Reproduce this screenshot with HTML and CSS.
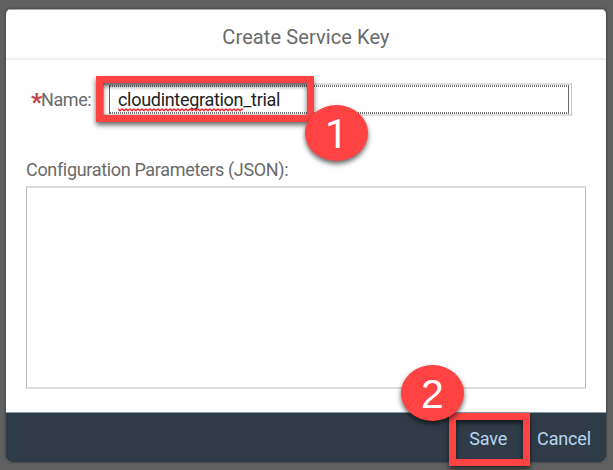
FILE: index.html
```html
<!DOCTYPE html>
<html lang="en">
<head>
<meta charset="utf-8">
<title>Create Service Key</title>
<link rel="stylesheet" href="styles.css">
</head>
<body>
<main class="dialog">
  <header class="title"><span>Create Service Key</span></header>
  <section class="content">
    <div class="name-row">
      <span class="label"><b class="required">*</b><span class="name-text">Name:</span></span>
      <div class="input"><div class="focus"><span class="value"><span class="typo">cloudintegration<svg class="wave" width="125" height="4"><defs><pattern id="wave" width="4" height="4" patternUnits="userSpaceOnUse"><path d="M0 .8 L2 2.8 L4 .8" fill="none" stroke="#ff2028" stroke-width="1.4"/></pattern></defs><rect width="125" height="4" fill="url(#wave)"/></svg></span>_trial</span></div></div>
    </div>
    <div class="params-label"><span>Configuration Parameters (JSON):</span></div>
    <div class="textarea"></div>
  </section>
  <footer class="footer"><span class="save">Save</span><span class="cancel">Cancel</span></footer>
</main>
<div class="mark mark-name"></div>
<div class="badge badge-one">1</div>
<div class="mark mark-save"></div>
<div class="badge badge-two">2</div>
</body>
</html>
```
FILE: styles.css
```css
* { box-sizing: border-box; }
body {
  margin: 0;
  width: 613px;
  height: 470px;
  padding: 9px 7px 8px 6px;
  overflow: hidden;
  background: #606060;
  font-family: Roboto, "Liberation Sans", sans-serif;
  font-size: 18px;
  color: #6a6a6a;
}
.dialog {
  display: flex;
  flex-direction: column;
  width: 600px;
  height: 453px;
  border-radius: 5px;
  overflow: hidden;
  background: #fff;
  box-shadow: 0 0 3px rgba(0, 0, 0, .5);
}
.title {
  height: 51px;
  border-top: 1px solid #aaa;
  border-bottom: 2px solid #f1f1f1;
  text-align: center;
  font-size: 20px;
  letter-spacing: .1px;
  line-height: 55px;
}
.content { flex: 1; padding: 23px 20px 0; }
.name-row { display: flex; height: 33px; }
.label { display: flex; width: 77px; padding-left: 5px; line-height: 33px; letter-spacing: -.4px; }
.required { color: #c14646; font-size: 24px; font-weight: 900; line-height: 38px; width: 10px; }
.input {
  width: 469px;
  padding: 0 2px 0 5px;
  border: 1px solid #c4c4c4;
  border-top: 2px solid #ddd;
  border-bottom: 2px solid #ddd;
}
.focus {
  height: 29px;
  padding-left: 8px;
  border-left: 1px solid #666;
  border-right: 1px solid #666;
  background:
    repeating-linear-gradient(90deg, #777 0 1px, #fff 1px 2px) top / 100% 2px no-repeat,
    repeating-linear-gradient(90deg, #777 0 1px, #fff 1px 2px) bottom / 100% 2px no-repeat;
  color: #222;
  line-height: 29px;
  letter-spacing: -.3px;
}
.typo { position: relative; }
.wave { position: absolute; left: 0; bottom: -2px; }
.params-label { height: 70px; padding-top: 43px; line-height: 22px; letter-spacing: -.33px; }
.textarea {
  height: 203px;
  border: 1px solid #b9b9b9;
  border-top: 2px solid #ddd;
  border-bottom: 2px solid #ddd;
}
.footer {
  display: flex;
  justify-content: flex-end;
  gap: 30px;
  height: 50px;
  padding-right: 15px;
  border-top: 1px solid #849ca9;
  background: #2f3c48;
  color: #b8d5f0;
  line-height: 51px;
  letter-spacing: -.15px;
}
.mark { position: absolute; border: 7px solid #ff4343; }
.mark-name {
  left: 96px; top: 76px; width: 218px; height: 46px;
  box-shadow: 0 3px 5px rgba(0, 0, 0, .6), inset 0 3px 5px rgba(0, 0, 0, .6);
}
.mark-save {
  left: 449px; top: 413px; width: 81px; height: 53px;
  box-shadow: 0 3px 5px rgba(0, 0, 0, .6), inset 0 3px 5px rgba(0, 0, 0, .6);
}
.badge {
  position: absolute;
  width: 63px;
  height: 56px;
  border-radius: 50%;
  background: #ff4343;
  box-shadow: 0 3px 5px rgba(0, 0, 0, .6);
  color: #fff;
  font: 41px/58px "Liberation Sans", sans-serif;
  text-align: center;
}
.badge-one { left: 305px; top: 105px; font-family: Roboto, sans-serif; }
.badge-two { left: 401px; top: 365px; }
```
